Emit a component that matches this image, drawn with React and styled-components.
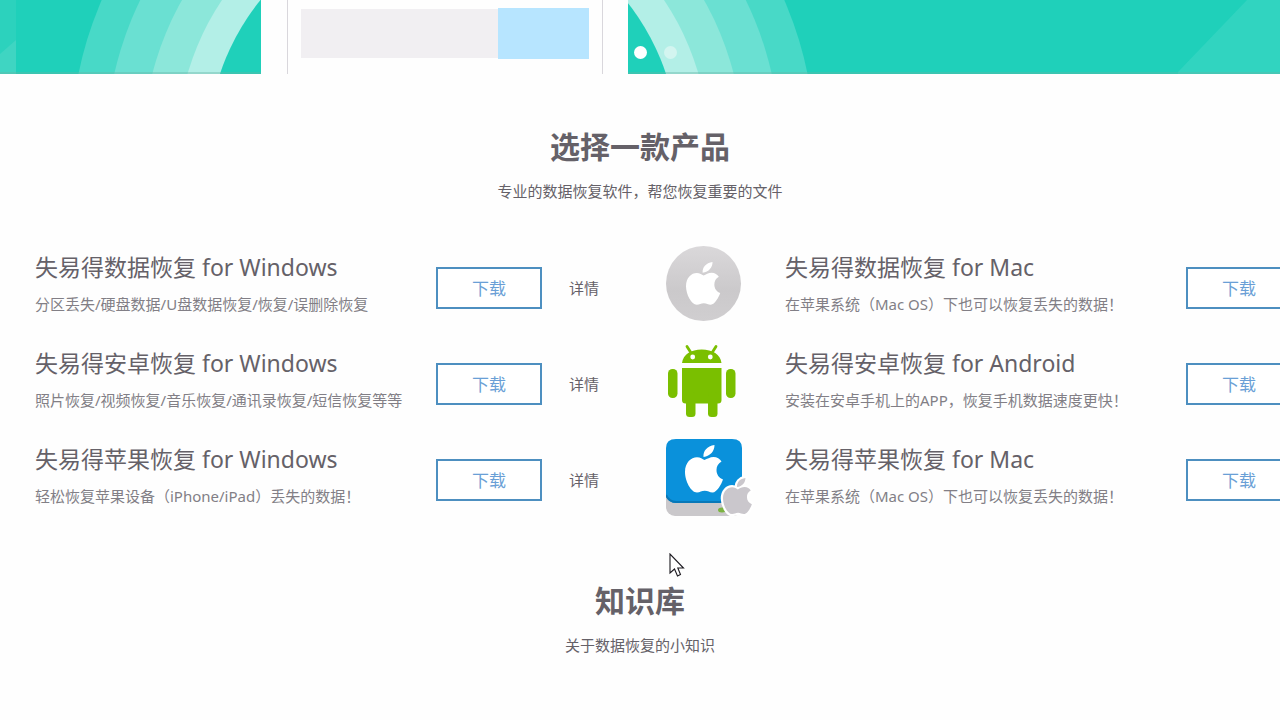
import React from "react";
import styled, { createGlobalStyle } from "styled-components";

const GlobalStyle = createGlobalStyle`
  * {
    box-sizing: border-box;
  }

  body {
    margin: 0;
    background-color: #fefefe;
    color: #656168;
    font-family: "Noto Sans", "Noto Sans CJK SC", sans-serif;
    font-size: 15px;
    line-height: 22px;
  }
`;

const Page = styled.main`
  position: relative;
  overflow: hidden;
`;

const Banner = styled.header`
  position: relative;
  display: flex;
  height: 74px;
  padding-left: 261px;
  background-color: #1fd0ba;
`;

const Rings = styled.svg`
  position: absolute;
  top: 0;
  left: 0;
  width: 100%;
  height: 100%;
`;

const Corner = styled.svg`
  position: absolute;
  top: 0;
  right: 0;
`;

const Panel = styled.div`
  position: relative;
  width: 367px;
  padding: 0 25px 0 26px;
  background-color: #fefefe;
`;

const PanelInner = styled.div`
  display: flex;
  height: 100%;
  padding: 8px 13px 15px;
  border: solid #d9d7dc;
  border-width: 0 1px;
`;

const GreyBlock = styled.div`
  flex: 1;
  margin: 1px 0;
  background-color: #f1eff2;
`;

const BlueBlock = styled.div`
  width: 91px;
  background-color: #b7e5ff;
`;

const Dots = styled.nav`
  position: relative;
  display: flex;
  align-items: flex-end;
  gap: 17px;
  padding: 0 0 15px 6px;
`;

const Dot = styled.button`
  width: 13px;
  height: 13px;
  padding: 0;
  border: none;
  border-radius: 50%;
  background-color: ${({ $active }) => ($active ? "#ffffff" : "#d3f5f0")};
`;

const Section = styled.section`
  padding-top: 54px;
  text-align: center;
`;

const Title = styled.h2`
  margin: 0 0 14px;
  font-size: 30px;
  font-weight: bold;
  line-height: 38px;
`;

const Subtitle = styled.p`
  margin: 0;
`;

const Products = styled.div`
  display: grid;
  grid-template-columns: repeat(2, 750px);
  justify-content: center;
  margin-top: 38px;
  text-align: left;
`;

const ProductRow = styled.article`
  display: grid;
  grid-template-columns: 119px 401px 106px 1fr;
  align-items: center;
  height: 96px;
  padding-left: 26px;
`;

const IconSlot = styled.div`
  height: 84px;
`;

const Info = styled.div`
  padding-bottom: 10px;
  white-space: nowrap;
`;

const Name = styled.h3`
  margin: 0 0 10px;
  font-size: 23px;
  font-weight: normal;
  line-height: 32px;
`;

const Description = styled.p`
  margin: 0;
  color: #827f86;
`;

const Download = styled.button`
  height: 42px;
  padding: 0 0 2px;
  border: 2px solid #4d8fc0;
  background-color: #ffffff;
  color: #6a9fd6;
  font-family: inherit;
  font-size: 17px;
`;

const Details = styled.a`
  justify-self: start;
  margin-left: 27px;
  color: inherit;
  text-decoration: none;
`;

const Cursor = styled.svg`
  position: absolute;
  top: 553px;
  left: 669px;
`;

const AppleShape = (props) => (
  <path
    d="M18.500 12C18 6 22 1 29.500 0C29.500 6 25.500 11 18.500 12ZM19.500 15C22 14 25 12 28.500 12C32 12 35 14 36.500 16.500C33 18.500 31.500 21.500 31.500 25C31.500 29.500 34 33 38 34.500C36.500 39 32 47.500 27.500 47.500C24.500 47.500 23 45.800 19.800 45.800C16.500 45.800 15 47.500 12 47.500C6 47.500 0 36 0 27C0 17.500 6 12.300 12 12.300C15.500 12.300 17.500 14.200 19.500 15Z"
    {...props}
  />
);

const MacIcon = () => (
  <svg width="88" height="84">
    <defs>
      <linearGradient id="disc" x1="0" y1="0" x2="0" y2="1">
        <stop offset="0" stopColor="#dad8da" />
        <stop offset="0.6" stopColor="#cbc9cb" />
        <stop offset="1" stopColor="#d0ced0" />
      </linearGradient>
    </defs>
    <circle cx="37.5" cy="37.5" r="37.5" fill="url(#disc)" />
    <AppleShape transform="translate(20 16) scale(0.9)" fill="#ffffff" />
  </svg>
);

const AndroidIcon = () => (
  <svg width="88" height="84" fill="#7abf00">
    <path d="M21 4.500 24.500 10M50 4.500 46.500 10" stroke="#7abf00" strokeWidth="2.8" strokeLinecap="round" />
    <path d="M16 21C17 12.500 25 7.500 35.700 7.500S54.500 12.500 55.500 21Z" />
    <circle cx="26.700" cy="15" r="2.400" fill="#ffffff" />
    <circle cx="44.300" cy="15" r="2.400" fill="#ffffff" />
    <path d="M16 26H55.500V58Q55.500 61.500 52 61.500H19.500Q16 61.500 16 58Z" />
    <rect x="20" y="50" width="9.500" height="25" rx="3.500" />
    <rect x="42" y="50" width="9.500" height="25" rx="3.500" />
    <rect x="2" y="27" width="9.500" height="29" rx="4.500" />
    <rect x="60" y="27" width="9.500" height="29" rx="4.500" />
  </svg>
);

const DriveIcon = () => (
  <svg width="88" height="84">
    <rect x="0" y="20" width="76" height="58" rx="9" fill="#cac8cb" />
    <path d="M0 10Q0 1 10 1H66Q76 1 76 10V65H10Q3 65 0 58Z" fill="#0a91db" />
    <path d="M0 57Q3 64 10 64H76" fill="none" stroke="#0878b8" strokeWidth="2" />
    <AppleShape transform="translate(19 7)" fill="#ffffff" />
    <ellipse cx="56" cy="72" rx="4" ry="2.500" fill="#7cb342" />
    <g transform="translate(57 40) scale(0.76)">
      <AppleShape fill="#ffffff" stroke="#ffffff" strokeWidth="6" strokeLinejoin="round" />
      <AppleShape fill="#cac7cc" />
    </g>
  </svg>
);

const rings = [
  [372, "#48d9c7"],
  [337, "#6ae0d2"],
  [300, "#8ce7da"],
  [266, "#b3efe7"],
  [235, "#1fd0ba"],
];

const winProducts = [
  { name: "失易得数据恢复 for Windows", text: "分区丢失/硬盘数据/U盘数据恢复/恢复/误删除恢复" },
  { name: "失易得安卓恢复 for Windows", text: "照片恢复/视频恢复/音乐恢复/通讯录恢复/短信恢复等等" },
  { name: "失易得苹果恢复 for Windows", text: "轻松恢复苹果设备（iPhone/iPad）丢失的数据！" },
];

const otherProducts = [
  { name: "失易得数据恢复 for Mac", text: "在苹果系统（Mac OS）下也可以恢复丢失的数据！", Icon: MacIcon },
  {
    name: "失易得安卓恢复 for Android",
    text: "安装在安卓手机上的APP，恢复手机数据速度更快！",
    Icon: AndroidIcon,
  },
  { name: "失易得苹果恢复 for Mac", text: "在苹果系统（Mac OS）下也可以恢复丢失的数据！", Icon: DriveIcon },
];

const Product = ({ name, text, Icon, details }) => (
  <ProductRow>
    <IconSlot>{Icon && <Icon />}</IconSlot>
    <Info>
      <Name>{name}</Name>
      <Description>{text}</Description>
    </Info>
    <Download type="button">下载</Download>
    {details && <Details href="#details">详情</Details>}
  </ProductRow>
);

const App = () => {
  return (
    <Page>
      <GlobalStyle />
      <Banner>
        <Rings>
          {rings.map(([r, fill]) => (
            <circle key={r} cx="443" cy="148" r={r} fill={fill} />
          ))}
          <rect width="16" height="74" fill="#2cd2bd" />
          <path d="M16 40V74H0V54Z" fill="#3fd5c2" />
        </Rings>
        <Corner width="102" height="74">
          <path d="M0 72 69 0H102V74H0Z" fill="#31d4c0" />
        </Corner>
        <Rings>
          <rect y="72" width="100%" height="2" fill="#66b3a4" fillOpacity="0.4" />
        </Rings>
        <Panel>
          <PanelInner>
            <GreyBlock />
            <BlueBlock />
          </PanelInner>
        </Panel>
        <Dots>
          <Dot type="button" aria-label="1" $active />
          <Dot type="button" aria-label="2" />
        </Dots>
      </Banner>

      <Section>
        <Title>选择一款产品</Title>
        <Subtitle>专业的数据恢复软件，帮您恢复重要的文件</Subtitle>
        <Products>
          <div>
            {winProducts.map((p) => (
              <Product key={p.name} {...p} details />
            ))}
          </div>
          <div>
            {otherProducts.map((p) => (
              <Product key={p.name} {...p} />
            ))}
          </div>
        </Products>
      </Section>

      <Section>
        <Title>知识库</Title>
        <Subtitle>关于数据恢复的小知识</Subtitle>
      </Section>

      <Cursor width="16" height="25" aria-hidden="true">
        <path
          d="M1 1V20L5.500 16 8.500 23 11.500 21.500 8.800 15H14.500Z"
          fill="#ffffff"
          stroke="#1c1a20"
          strokeWidth="1.100"
        />
      </Cursor>
    </Page>
  );
};

export default App;
